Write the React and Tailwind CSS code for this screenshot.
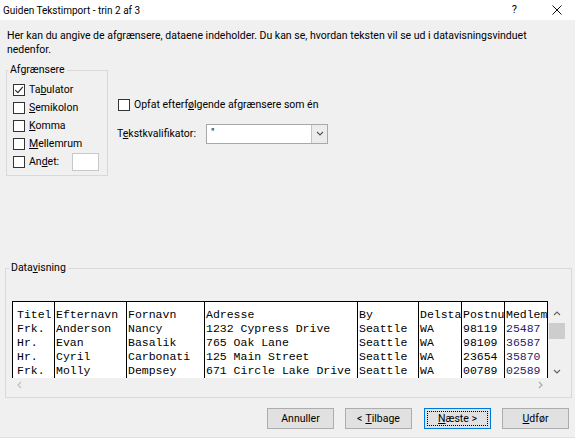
import React from "react";

const columns = [
  { w: "w-[39px]", cells: ["Titel", "Frk.", "Hr.", "Hr.", "Frk."] },
  { w: "w-[72px]", cells: ["Efternavn", "Anderson", "Evan", "Cyril", "Molly"] },
  { w: "w-[78px]", cells: ["Fornavn", "Nancy", "Basalik", "Carbonati", "Dempsey"] },
  {
    w: "w-[153px]",
    cells: ["Adresse", "1232 Cypress Drive", "765 Oak Lane", "125 Main Street", "671 Circle Lake Drive"],
  },
  { w: "w-[61px]", cells: ["By", "Seattle", "Seattle", "Seattle", "Seattle"] },
  { w: "w-[43px]", cells: ["Delstat", "WA", "WA", "WA", "WA"] },
  { w: "w-[43px]", cells: ["Postnummer", "98119", "98109", "23654", "00789"] },
  { w: "w-[43px]", cells: ["Medlemsnummer", "25487", "36587", "35870", "02589"], colored: true },
];

const delimiters = [
  { pre: "Ta", key: "b", post: "ulator", checked: true },
  { pre: "", key: "S", post: "emikolon" },
  { pre: "", key: "K", post: "omma" },
  { pre: "", key: "M", post: "ellemrum" },
];

// Windows style checkbox
const Check = ({ checked }) => (
  <span className="w-[12px] h-[12px] border border-[#333333] bg-white flex items-center justify-center shrink-0">
    {checked && (
      <svg width="10" height="10" viewBox="0 0 10 10">
        <path d="M1.3 5.1 L3.9 7.7 L8.8 1.9" fill="none" stroke="#222" strokeWidth="1.1" />
      </svg>
    )}
  </span>
);

const Chevron = ({ dir, color = "#606060" }) => {
  const d = {
    up: "M1 5 L4 2 L7 5",
    down: "M1 2 L4 5 L7 2",
    left: "M5 1 L2 4 L5 7",
    right: "M2 1 L5 4 L2 7",
  }[dir];
  return (
    <svg width="8" height="8" viewBox="0 0 8 8" className="shrink-0">
      <path d={d} fill="none" stroke={color} strokeWidth="1.1" />
    </svg>
  );
};

const Button = ({ children, focused }) => (
  <button
    className={`w-[67px] h-[21px] bg-[#e1e1e1] border text-[10.5px] text-black flex items-stretch p-[2px] ${
      focused ? "border-[#0078d7]" : "border-[#adadad]"
    }`}
  >
    <span
      className={`flex-1 flex items-center justify-center ${
        focused ? "border border-dotted border-black" : ""
      }`}
    >
      {children}
    </span>
  </button>
);

export default function App() {
  return (
    <div className="w-[575px] h-[438px] bg-[#f0f0f0] flex flex-col text-black font-['Roboto','Liberation_Sans',sans-serif] text-[10.5px] overflow-hidden">
      {/* Title bar */}
      <div className="h-[20px] bg-white flex items-center pl-[3px] pr-[13px] shrink-0 text-[10px]">
        <span className="flex-1">Guiden Tekstimport - trin 2 af 3</span>
        <span className="text-[11px] mr-[35px]">?</span>
        <svg width="10" height="10" viewBox="0 0 10 10">
          <path d="M0.5 0.5 L9.5 9.5 M9.5 0.5 L0.5 9.5" stroke="#111" strokeWidth="1" />
        </svg>
      </div>

      {/* Instruction */}
      <div className="mt-[9px] px-[7px] leading-[14px] whitespace-nowrap">
        <span className="block">
          Her kan du angive de afgrænsere, dataene indeholder. Du kan se, hvordan teksten vil se ud i datavisningsvinduet
        </span>
        <span className="block">nedenfor.</span>
      </div>

      {/* Delimiters + options */}
      <div className="flex mt-[6px]">
        <fieldset className="ml-[6px] w-[102px] h-[113px] border border-[#d9d9d9] pl-[6px] pt-[4px]">
          <legend className="ml-[-5px] px-[2px] leading-[14px]">Afgrænsere</legend>
          {delimiters.map((d) => (
            <div key={d.post} className="h-[18px] flex items-center gap-[4px]">
              <Check checked={d.checked} />
              <span>
                {d.pre}
                <span className="underline">{d.key}</span>
                {d.post}
              </span>
            </div>
          ))}
          <div className="h-[18px] flex items-center">
            <Check />
            <span className="ml-[4px] w-[43px]">
              An<span className="underline">d</span>et:
            </span>
            <span className="w-[27px] h-[18px] bg-white border border-[#c8c8c8]" />
          </div>
        </fieldset>

        <div className="ml-[10px] pt-[35px] flex flex-col">
          <div className="h-[14px] flex items-center gap-[4px]">
            <Check />
            <span>
              Opfat efterf<span className="underline">ø</span>lgende afgrænsere som én
            </span>
          </div>
          <div className="mt-[12px] flex items-center">
            <span className="w-[89px] ml-[-1px]">
              T<span className="underline">e</span>kstkvalifikator:
            </span>
            <div className="w-[122px] h-[20px] border border-[#a9a9a9] bg-white flex">
              <span className="flex-1 pl-[4px] leading-[16px]">"</span>
              <span className="w-[16px] border-l border-[#c4c4c4] bg-[#ececec] flex items-center justify-center">
                <Chevron dir="down" color="#555" />
              </span>
            </div>
          </div>
        </div>
      </div>

      {/* Data preview */}
      <fieldset className="mt-[85px] ml-[5px] w-[567px] h-[137px] border border-[#d9d9d9] pl-[6px] pt-[26px]">
        <legend className="ml-[-3px] px-[2px] leading-[14px]">
          Data<span className="underline">v</span>isning
        </legend>
        <div className="flex">
          <div className="flex flex-col">
            <div className="flex bg-white border-l border-t border-black pl-[3px] font-['Liberation_Mono',monospace] text-[11.5px] leading-[14px]">
              {columns.map((col) => (
                <div
                  key={col.cells[0]}
                  className={`${col.w} h-[76px] pt-[6px] pl-[1px] border-r border-black overflow-hidden whitespace-nowrap`}
                >
                  {col.cells.map((c, i) => (
                    <div key={i} className={col.colored && i > 0 ? "text-[#23236f]" : ""}>
                      {c}
                    </div>
                  ))}
                </div>
              ))}
            </div>
            <div className="h-[14px] w-[536px] flex items-center justify-between pl-[4px] pr-[3px]">
              <Chevron dir="left" color="#bdbdbd" />
              <Chevron dir="right" color="#a8a8a8" />
            </div>
          </div>
          <div className="w-[17px] h-[77px] flex flex-col items-center pt-[9px]">
            <Chevron dir="up" />
            <span className="mt-[5px] w-[16px] h-[16px] bg-[#cdcdcd]" />
            <span className="mt-[29px]">
              <Chevron dir="down" />
            </span>
          </div>
        </div>
      </fieldset>

      {/* Buttons */}
      <div className="mt-[10px] flex justify-end pr-[6px]">
        <Button>Annuller</Button>
        <span className="ml-[11px]">
          <Button>
            &lt; <span className="underline ml-[3px]">T</span>ilbage
          </Button>
        </span>
        <span className="ml-[12px]">
          <Button focused>
            <span className="underline">N</span>æste &gt;
          </Button>
        </span>
        <span className="ml-[11px]">
          <Button>
            <span className="underline">U</span>dfør
          </Button>
        </span>
      </div>

      <div className="mt-auto h-px bg-[#d3e2f0]" />
    </div>
  );
}
